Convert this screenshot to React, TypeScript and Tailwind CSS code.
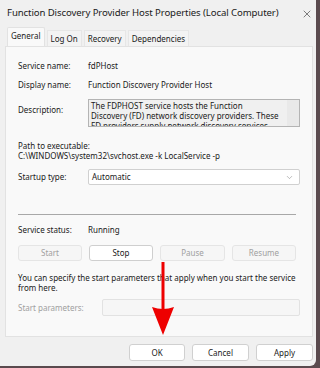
import { X, ChevronDown } from 'lucide-react'

const font = { fontFamily: '"Noto Sans", "Open Sans", sans-serif' }

function Btn({ label, disabled, w }: { label: string; disabled?: boolean; w: string }) {
  return (
    <div
      className={`${w} h-[16px] flex items-center justify-center rounded-[3px] border text-[8px] ${
        disabled ? 'border-[#e5e5e5] bg-[#f6f6f6] text-[#a0a0a0]' : 'border-[#cfcfcf] bg-white text-[#1a1a1a]'
      }`}
    >
      {label}
    </div>
  )
}

export default function App() {
  return (
    <div style={font} className="w-[320px] h-[368px] bg-[#5a4a4e] flex">
      <div className="w-[316px] h-[366px] bg-[#f0f0f0] rounded-br-[6px] flex flex-col text-[#1a1a1a]">
        {/* title bar */}
        <div className="h-[27px] flex items-center justify-between pl-[7px] pr-[3px]">
          <span className="text-[9.6px] tracking-[-0.1px]">Function Discovery Provider Host Properties (Local Computer)</span>
          <X size={12} strokeWidth={1.1} />
        </div>

        {/* tabs */}
        <div className="flex items-end pl-[7px] h-[19px] text-[8px] gap-[2px]">
          <div className="h-[19px] px-[3px] pb-[2px] bg-[#f9f9f9] border border-b-0 border-[#e2e2e2] rounded-t-[2px] flex items-center">General</div>
          <div className="h-[16px] px-[3px] bg-[#f3f3f3] border border-b-0 border-[#e6e6e6] flex items-center">Log On</div>
          <div className="h-[16px] px-[3px] bg-[#f3f3f3] border border-b-0 border-[#e6e6e6] flex items-center">Recovery</div>
          <div className="h-[16px] px-[3px] bg-[#f3f3f3] border border-b-0 border-[#e6e6e6] flex items-center">Dependencies</div>
        </div>

        {/* panel */}
        <div className="relative mx-[5px] w-[308px] h-[291px] bg-[#f9f9f9] border border-[#e2e2e2] text-[8px] px-[12px] flex flex-col">
          <div className="flex mt-[13px] h-[12px] items-center">
            <span className="w-[70px]">Service name:</span>
            <span>fdPHost</span>
          </div>
          <div className="flex mt-[7px] h-[12px] items-center">
            <span className="w-[70px]">Display name:</span>
            <span>Function Discovery Provider Host</span>
          </div>
          <div className="flex mt-[8px]">
            <span className="w-[70px] mt-[5px]">Description:</span>
            <div className="w-[212px] h-[28px] border border-[#b4b4b4] bg-[#f0f0f0] flex overflow-hidden">
              <div className="flex-1 pl-[2px] pr-[8px] leading-[10px] pt-[1px]">
                The FDPHOST service hosts the Function Discovery (FD) network discovery providers. These FD providers supply network discovery services for
              </div>
              <div className="w-[12px] bg-[#e9e9e9]" />
            </div>
          </div>
          <div className="mt-[14px] leading-[10px]">Path to executable:</div>
          <div className="leading-[10px]">C:\WINDOWS\system32\svchost.exe -k LocalService -p</div>
          <div className="flex mt-[8px] items-center">
            <span className="w-[70px]">Startup type:</span>
            <div className="w-[212px] h-[16px] bg-white border border-[#d0d0d0] rounded-[2px] flex items-center justify-between pl-[3px] pr-[5px]">
              <span>Automatic</span>
              <ChevronDown size={9} strokeWidth={1.1} className="text-[#606060]" />
            </div>
          </div>
          <div className="mt-[29px] w-[278px] h-px bg-[#a8a8a8]" />
          <div className="flex mt-[9px] h-[12px] items-center">
            <span className="w-[70px]">Service status:</span>
            <span>Running</span>
          </div>
          <div className="flex mt-[9px] gap-[7px]">
            <Btn label="Start" disabled w="w-[64px]" />
            <Btn label="Stop" w="w-[64px]" />
            <Btn label="Pause" disabled w="w-[65px]" />
            <Btn label="Resume" disabled w="w-[64px]" />
          </div>
          <div className="mt-[12px] leading-[10px]">
            You can specify the start parameters that apply when you start the service from here.
          </div>
          <div className="flex mt-[6px] items-center">
            <span className="w-[84px] text-[#a0a0a0]">Start parameters:</span>
            <div className="w-[198px] h-[17px] border border-[#e2e2e2] bg-[#f6f6f6] rounded-[2px]" />
          </div>

          {/* red arrow */}
          <svg className="absolute left-[146px] top-[215px]" width="22" height="73" viewBox="0 0 22 73">
            <rect x="9.5" y="0" width="3" height="50" fill="#ee0000" />
            <path d="M0 45 Q11 49 22 45 L11 73 Z" fill="#ee0000" />
          </svg>
        </div>

        {/* bottom buttons */}
        <div className="flex justify-end gap-[7px] mr-[3px] mt-[7px] text-[8px]">
          <div className="w-[56px] h-[17px] bg-white border border-[#d0d0d0] rounded-[3px] flex items-center justify-center">OK</div>
          <div className="w-[57px] h-[17px] bg-white border border-[#d0d0d0] rounded-[3px] flex items-center justify-center">Cancel</div>
          <div className="w-[57px] h-[17px] bg-white border border-[#d0d0d0] rounded-[3px] flex items-center justify-center">Apply</div>
        </div>
      </div>
    </div>
  )
}
